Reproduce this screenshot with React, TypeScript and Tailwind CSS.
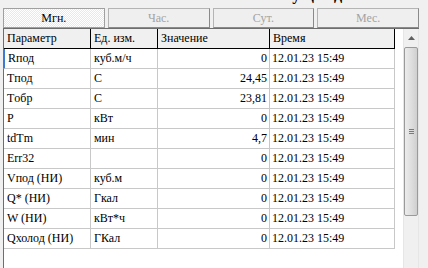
const rows = [
  { name: 'Rпод', unit: 'куб.м/ч', value: '0' },
  { name: 'Tпод', unit: 'C', value: '24,45' },
  { name: 'Tобр', unit: 'C', value: '23,81' },
  { name: 'P', unit: 'кВт', value: '0' },
  { name: 'tdTm', unit: 'мин', value: '4,7' },
  { name: 'Err32', unit: '', value: '0' },
  { name: 'Vпод (НИ)', unit: 'куб.м', value: '0' },
  { name: 'Q* (НИ)', unit: 'Гкал', value: '0' },
  { name: 'W (НИ)', unit: 'кВт*ч', value: '0' },
  { name: 'Qхолод (НИ)', unit: 'ГКал', value: '0' },
];

const tabs = ['Мгн.', 'Час.', 'Сут.', 'Мес.'];

export default function App() {
  return (
    <div className="w-[428px] h-[268px] bg-[#f0f0f0] overflow-hidden text-[12px] text-black [font-family:'Liberation_Serif','DejaVu_Serif',serif]">
      {/* clipped title above */}
      <div className="h-[8px] pl-[266px]">
        <div className="h-[5px] overflow-hidden">
          <div className="-mt-[14px] text-[16px] font-bold leading-[18px] whitespace-nowrap">Текущие данные УУ-1</div>
        </div>
      </div>

      {/* Tabs */}
      <div className="grid grid-cols-4 gap-[3px] pl-[3px] pr-[9px] h-[19px]">
        {tabs.map((t, i) => (
          <div
            key={t}
            className={
              i === 0
                ? 'flex items-center justify-center border border-[#a0a0a0] bg-[#f4f4f4] bg-[repeating-conic-gradient(#ffffff_0_25%,#e9e9e9_0_50%)] bg-[length:2px_2px] text-black'
                : 'flex items-center justify-center border border-[#b4b4b4] border-r-[#8a8a8a] border-b-[#8a8a8a] bg-[#efefef] text-[#a3a3a3]'
            }
          >
            {t}
          </div>
        ))}
      </div>

      {/* Grid box */}
      <div className="mt-[1px] ml-[3px] mr-[9px] h-[240px] flex border-l border-t border-[#6e6e6e] bg-white">
        <div className="w-[391px]">
          {/* Header */}
          <div className="flex h-[20px] bg-[#f0f0f0] border-b border-black leading-[19px]">
            <div className="w-[87px] pl-[3px] border-r border-black">Параметр</div>
            <div className="w-[67px] pl-[3px] border-r border-black">Ед. изм.</div>
            <div className="w-[112px] pl-[3px] border-r border-black">Значение</div>
            <div className="w-[125px] pl-[3px] border-r border-black">Время</div>
          </div>
          {rows.map((r, i) => (
            <div
              key={r.name}
              className={`flex h-[20px] border-b border-[#c8c8c8] leading-[19px] ${i === 0 ? 'border-l-2 border-l-[#3a7bd5] -ml-[1px]' : ''}`}
            >
              <div className={`${i === 0 ? 'w-[86px]' : 'w-[87px]'} pl-[3px] border-r border-[#c8c8c8] whitespace-nowrap overflow-hidden`}>{r.name}</div>
              <div className="w-[67px] pl-[3px] border-r border-[#c8c8c8] whitespace-nowrap">{r.unit}</div>
              <div className="w-[112px] pr-[2px] text-right border-r border-[#c8c8c8]">{r.value}</div>
              <div className="w-[125px] pl-[2px] border-r border-[#c8c8c8]">12.01.23 15:49</div>
            </div>
          ))}
        </div>

        <div className="w-[8px]" />

        {/* Scrollbar */}
        <div className="w-[16px] bg-[#f0f0f0] border-x border-[#e6e6e6] flex flex-col">
          <div className="h-[18px] flex items-center justify-center">
            <svg width="7" height="4" viewBox="0 0 7 4">
              <path d="M0 4 L3.5 0 L7 4 Z" fill="#606060" />
            </svg>
          </div>
          <div className="h-[169px] rounded-[2px] border border-[#9a9a9a] bg-[linear-gradient(to_right,#ececec,#dcdcdc_60%,#cfcfcf)] flex items-center justify-center">
            <div className="flex flex-col gap-[1px]">
              <div className="w-[5px] h-[1px] bg-[#7a7a7a]" />
              <div className="w-[5px] h-[1px] bg-[#7a7a7a]" />
              <div className="w-[5px] h-[1px] bg-[#7a7a7a]" />
            </div>
          </div>
        </div>
      </div>
    </div>
  );
}
